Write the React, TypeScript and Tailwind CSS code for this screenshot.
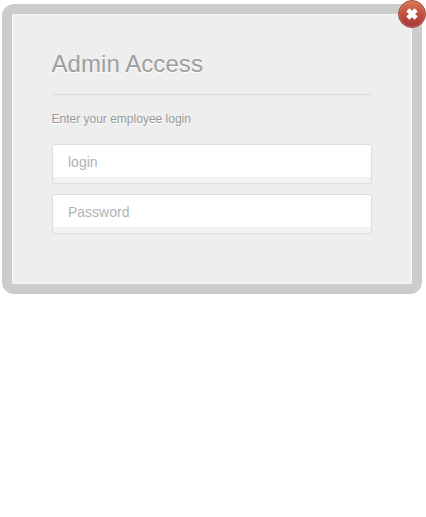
type FieldProps = { placeholder: string; type: string };

function Field({ placeholder, type }: FieldProps) {
  return (
    <input
      type={type}
      placeholder={placeholder}
      aria-label={placeholder}
      className="block h-10 w-full rounded-[3px] border border-[#dcdcdc] bg-white px-[15px] pt-0 pb-1 text-sm text-[#777] shadow-[inset_0_-6px_0_#f2f2f2] outline-none placeholder:text-[#b2b2b2]"
    />
  );
}

function CloseButton() {
  return (
    <button type="button" aria-label="Close" className="absolute -top-[15px] -right-[15px] size-7">
      <svg viewBox="0 0 28 28" className="block size-7">
        <defs>
          <linearGradient id="closeFill" x1="0" y1="0" x2="0" y2="1">
            <stop offset="0" stopColor="#db7a54" />
            <stop offset="0.5" stopColor="#c04f41" />
            <stop offset="1" stopColor="#a5353a" />
          </linearGradient>
        </defs>
        <circle cx="14" cy="14" r="13.5" fill="url(#closeFill)" stroke="#9a5148" />
        <circle cx="14" cy="14" r="12.5" fill="none" stroke="#e08a68" strokeOpacity="0.35" />
        <path d="M9.9 9.9 18.1 18.1M18.1 9.9 9.9 18.1" stroke="#fff" strokeWidth="4.5" fill="none" />
      </svg>
    </button>
  );
}

export default function App() {
  return (
    <main className="h-[517px] w-[426px] overflow-hidden bg-white pt-1 pl-0.5 font-['Liberation_Sans',Arial,sans-serif]">
      <div className="h-[290px] w-[420px] rounded-xl bg-[#cccccc] p-2.5">
        <section className="relative h-[270px] w-[400px] rounded-[1px] border border-[#f8f8f8] bg-[#eeeeee] px-[39px] pt-[33px]">
          <h1 className="h-[47px] border-b border-[#dadada] text-2xl leading-8 tracking-[0.06px] text-[#9e9e9e] [text-indent:-0.5px] [text-shadow:0_1px_0_#fff]">
            Admin Access
          </h1>
          <p className="mt-4 text-xs leading-4 text-[#999] [text-indent:-0.5px] [text-shadow:0_1px_0_#fff]">
            Enter your employee login
          </p>
          <form className="mt-[17px] flex flex-col gap-2.5">
            <Field type="text" placeholder="login" />
            <Field type="password" placeholder="Password" />
          </form>
          <CloseButton />
        </section>
      </div>
    </main>
  );
}
